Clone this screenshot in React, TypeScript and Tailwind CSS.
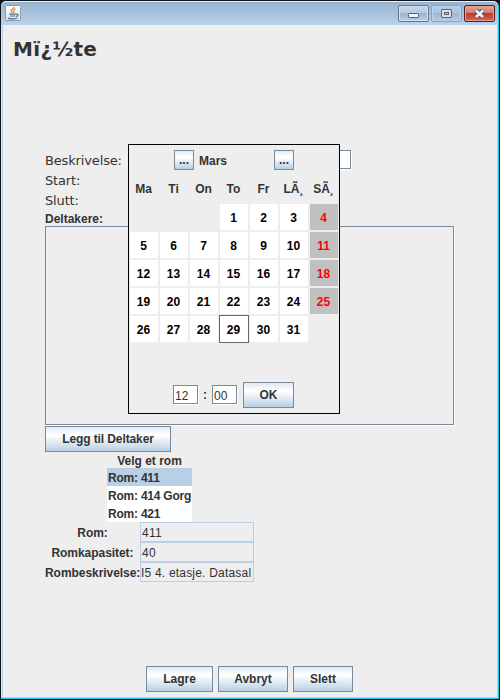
import type { ReactNode } from 'react';

const weekdays = ['Ma', 'Ti', 'On', 'To', 'Fr', 'LÃ¸', 'SÃ¸'];
const cells: (number | null)[] = [
  null, null, null,
  ...Array.from({ length: 31 }, (_, i) => i + 1),
  null,
];
const rooms = ['Rom: 411', 'Rom: 414 Gorg', 'Rom: 421'];

function MetalButton({ className, children }: { className: string; children: ReactNode }) {
  return (
    <button
      className={`flex shrink-0 items-center justify-center whitespace-nowrap border border-[#7a8a99] bg-[linear-gradient(180deg,#dde8f3_0%,#ffffff_30%,#ffffff_36%,#b8cfe5_100%)] font-bold ${className}`}
    >
      {children}
    </button>
  );
}

function JavaIcon() {
  return (
    <svg width="16" height="16" viewBox="0 0 16 16" fill="none">
      <defs>
        <linearGradient id="tile" x1="0" y1="0" x2="0" y2="1">
          <stop offset="0" stopColor="#ffffff" />
          <stop offset="1" stopColor="#dde2e6" />
        </linearGradient>
      </defs>
      <rect x=".5" y=".5" width="15" height="15" rx="1" fill="url(#tile)" stroke="#8c9cab" />
      <path d="M8.8 1.8c.6 1.9-2.8 2.5-2.5 4.2.1.8 1 1.3 1.2 2.2M10.6 3.8c-1.5.6-2.4 1.3-1.8 2.2.5.7.1 1.4-.4 2" stroke="#ef8d32" strokeWidth="1.3" />
      <path d="M4.2 9.2h6.6M5 11h5.3M3 13.1c2.6.9 7 .8 9.3-.1M11 9.3c2.6-.7 2.6 1.9.2 2.3" stroke="#4c748f" strokeWidth="1.2" />
    </svg>
  );
}

function TitleBar() {
  return (
    <header className="flex h-6 shrink-0 justify-between rounded-t-[5px] border-t border-[#e4f0fb] bg-linear-to-b from-[#98b3d0] to-[#bad2eb] pl-1 pr-[3px] pt-[3px]">
      <JavaIcon />
      <div className="flex gap-[2px]">
        <div className="flex h-[17px] w-[31px] justify-center rounded-[2px] border border-[#66778e] bg-[linear-gradient(180deg,#c1d4e8_0%,#b5cbe2_46%,#98b4d0_50%,#b5d0e9_100%)] shadow-[inset_0_0_0_1px_#d2e1f0]">
          <svg width="29" height="15">
            <rect x="9.5" y="7.5" width="10" height="4" rx=".7" fill="#f5f5f5" stroke="#555d6e" />
          </svg>
        </div>
        <div className="flex h-[17px] w-[31px] justify-center rounded-[2px] border border-[#8aa4c0] bg-[linear-gradient(180deg,#b5cce4_0%,#acc5df_46%,#9cb9d7_50%,#b1cde8_100%)] shadow-[inset_0_0_0_1px_#bbd1e7]">
          <svg width="29" height="15">
            <rect x="9.5" y="3.5" width="10" height="8" rx=".5" fill="#dedfe4" stroke="#5e6678" />
            <rect x="12.5" y="6.5" width="4" height="2" fill="#a9c2de" stroke="#5e6678" />
          </svg>
        </div>
        <div className="flex h-[17px] w-[31px] justify-center rounded-[2px] border border-[#531b24] bg-[linear-gradient(180deg,#e3a196_0%,#d87b6c_46%,#bd3d29_50%,#cf6b50_100%)] shadow-[inset_0_0_0_1px_#e6a192]">
          <svg width="29" height="15" fill="none">
            <path d="m11 4.5 7 6.5m0-6.5-7 6.5" stroke="#53566a" strokeWidth="4.6" />
            <path d="m11 4.5 7 6.5m0-6.5-7 6.5" stroke="#f4f4f4" strokeWidth="2.6" />
          </svg>
        </div>
      </div>
    </header>
  );
}

function dayStyle(day: number | null, column: number) {
  if (day === null) return '';
  if (column === 6) return 'bg-[#c0c0c0] text-[#ff0000]';
  if (day === 29) return 'bg-white text-black outline outline-[#666666]';
  return 'bg-white text-black';
}

function Calendar() {
  return (
    <section className="absolute left-[128px] top-[144px] flex h-[270px] w-[212px] flex-col border border-black bg-[#eeeeee] font-bold">
      <div className="flex h-[25px] pl-[45px] pt-[5px]">
        <MetalButton className="h-5 w-5">...</MetalButton>
        <span className="w-20 pl-[5px] leading-[22px]">Mars</span>
        <MetalButton className="h-5 w-5">...</MetalButton>
      </div>
      <div className="flex pt-[5px]">
        {weekdays.map((d) => (
          <span key={d} className="w-[30px] pr-px text-center leading-[28px]">{d}</span>
        ))}
      </div>
      <div className="grid grid-cols-[repeat(7,28px)] gap-[2px] pl-px pt-px">
        {cells.map((day, i) => (
          <span key={i} className={`h-[26px] pr-px text-center leading-[28px] ${dayStyle(day, i % 7)}`}>
            {day}
          </span>
        ))}
      </div>
      <div className="mt-auto flex pb-[4px] pl-11">
        <input readOnly value="12" className="mt-[3px] h-[19px] w-[25px] border border-[#7a8a99] bg-white pl-px pt-[2px] font-normal shadow-[1px_1px_0_#ffffff]" />
        <span className="w-[14px] pl-[5px] leading-[27px]">:</span>
        <input readOnly value="00" className="mt-[3px] h-[19px] w-[25px] border border-[#7a8a99] bg-white pl-px pt-[2px] font-normal shadow-[1px_1px_0_#ffffff]" />
        <MetalButton className="ml-[6px] h-[26px] w-[51px]">OK</MetalButton>
      </div>
    </section>
  );
}

function RoomField({ label, value, scrolled = false }: { label: string; value: string; scrolled?: boolean }) {
  return (
    <div className="flex h-5">
      <span className="w-[95px] whitespace-nowrap text-center font-bold leading-[22px] tracking-[-0.05px]">{label}</span>
      <div
        className={`w-[114px] overflow-hidden whitespace-nowrap border border-[#b8cfe5] leading-[20px] ${scrolled ? 'tracking-[0.2px]' : 'pl-px tracking-[0.3px]'}`}
      >
        {value}
      </div>
    </div>
  );
}

export default function App() {
  return (
    <main className="relative h-[700px] w-[500px] overflow-hidden bg-[#101318] px-px pt-px font-['Liberation_Sans',Arial,sans-serif] text-[12px] text-[#333333]">
      <div className="flex h-[698px] flex-col rounded-t-[6px] border-b border-r border-[#1fc8ec] bg-[#b7d0e9]">
        <TitleBar />
        <div className="mb-px mr-px flex min-h-0 grow flex-col border-l border-[#d9e8f7] bg-[#b7d0e9] pl-px">
          <div className="flex min-h-0 grow flex-col bg-[#eeeeee] pl-[10px]">
            <h1 className="h-[125px] pt-[10px] font-['DejaVu_Sans',sans-serif] text-[20px] font-bold leading-[28px] tracking-[0.35px]">Mï¿½te</h1>
            <div className="flex flex-col pl-8 font-['DejaVu_Sans',sans-serif] text-[13px] tracking-[-0.15px]">
              <label className="flex h-[21px] items-start">
                <span className="w-[83px] leading-[22px]">Beskrivelse:</span>
                <input readOnly className="h-[19px] w-[223px] border border-[#7a8a99] bg-white shadow-[1px_1px_0_#ffffff]" />
              </label>
              <span className="h-5 leading-5">Start:</span>
              <span className="h-5 leading-5">Slutt:</span>
            </div>
            <div className="flex flex-col items-start pl-8">
              <span className="h-[15px] font-bold leading-[16px]">Deltakere:</span>
              <div className="h-[199px] w-[409px] border border-[#7a8a99] shadow-[1px_1px_0_#ffffff]" />
              <MetalButton className="mt-px h-[26px] w-[126px] tracking-[-0.1px]">Legg til Deltaker</MetalButton>
              <div className="flex w-[209px] flex-col items-center font-bold">
                <span className="h-4 leading-[18px]">Velg et rom</span>
                <ul className="w-[85px] bg-white tracking-[-0.22px]">
                  {rooms.map((room, i) => (
                    <li key={room} className={`h-[18px] whitespace-nowrap pl-px leading-[20px] ${i === 0 ? 'bg-[#b8cfe5]' : ''}`}>{room}</li>
                  ))}
                </ul>
              </div>
              <RoomField label="Rom:" value="411" />
              <RoomField label="Romkapasitet:" value="40" />
              <RoomField label="Rombeskrivelse:" value="I5 4. etasje. Datasal" scrolled />
            </div>
            <footer className="mb-[5px] mt-auto flex gap-[5px] pl-[133px]">
              <MetalButton className="h-[26px] w-[67px]">Lagre</MetalButton>
              <MetalButton className="h-[26px] w-[70px]">Avbryt</MetalButton>
              <MetalButton className="h-[26px] w-[60px]">Slett</MetalButton>
            </footer>
          </div>
        </div>
      </div>
      <Calendar />
    </main>
  );
}
